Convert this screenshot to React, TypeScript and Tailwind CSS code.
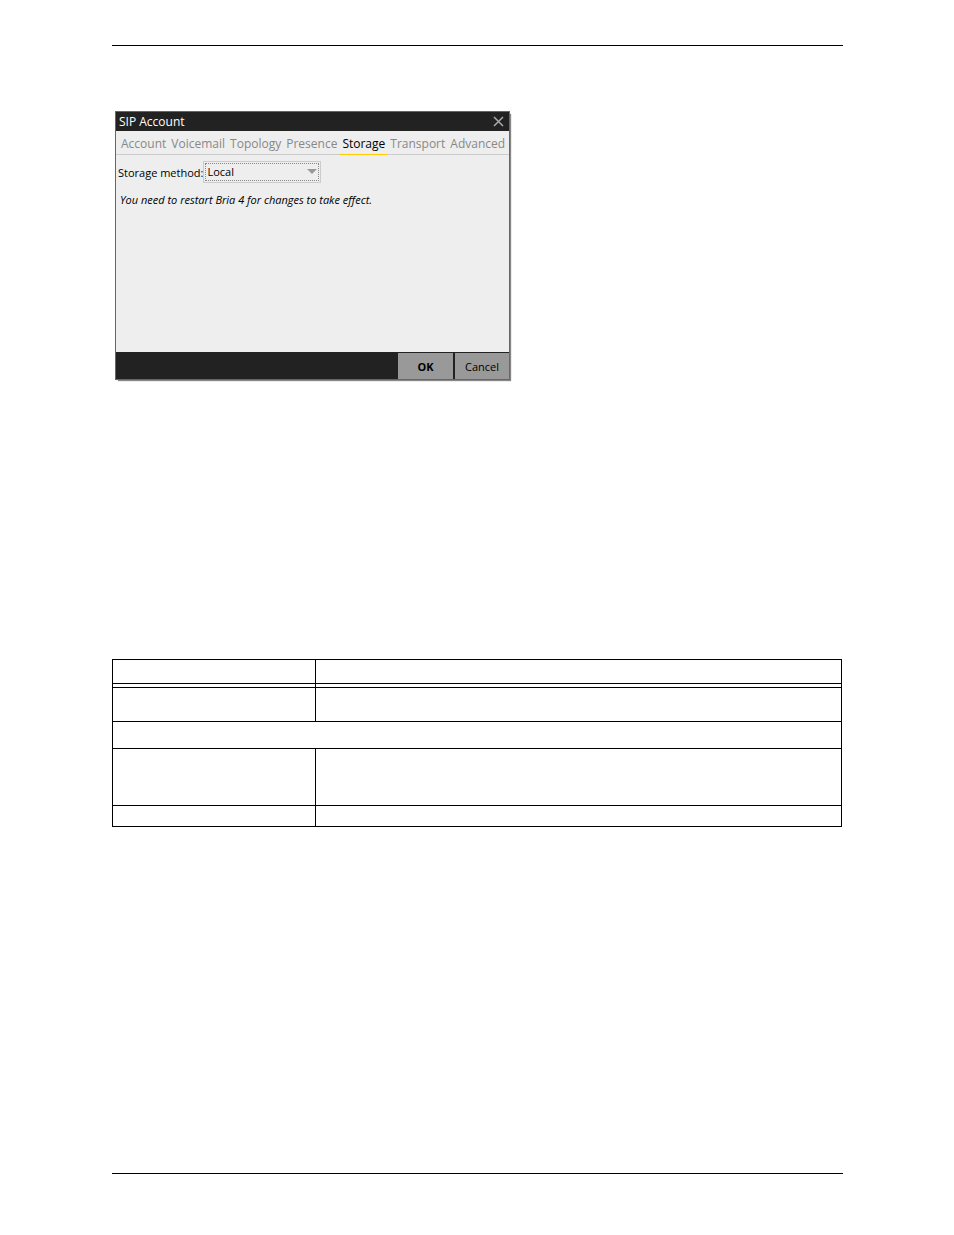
import { useState } from 'react'
import clsx from 'clsx'

const tabs = ['Account', 'Voicemail', 'Topology', 'Presence', 'Storage', 'Transport', 'Advanced']

function SipAccountDialog() {
  const [active, setActive] = useState('Storage')

  return (
    <section
      aria-label="SIP Account"
      className="ml-[3px] flex w-full max-w-[395px] flex-col border border-[#666] bg-[#eee] shadow-[2px_2px_1px_-1px_#888]"
    >
      {/* Title bar */}
      <header className="flex h-[19px] items-center justify-between bg-[#222] pl-[3px] pr-[5px]">
        <h1 className="text-[12px] leading-4 text-white">SIP Account</h1>
        <button type="button" aria-label="Close" className="text-[#aaa]">
          <svg width="11" height="11" viewBox="0 0 11 11" fill="none" stroke="currentColor" strokeWidth="1.5">
            <path d="M1 1l9 9M10 1l-9 9" />
          </svg>
        </button>
      </header>

      {/* Tabs */}
      <nav className="flex h-6 border-b border-[#ccc] pl-[2px]">
        {tabs.map((tab) => (
          <button
            key={tab}
            type="button"
            onClick={() => setActive(tab)}
            className={clsx(
              '-mb-px border-b pl-[3px] pr-[2px] pt-[2px] text-[12px] leading-4',
              tab === active ? 'border-[#fc0] text-black' : 'border-transparent text-[#888]'
            )}
          >
            {tab}
          </button>
        ))}
      </nav>

      <div className="h-[198px] border-b border-[#222] pl-[2px] pt-[6px]">
        <div className="flex items-center">
          <label htmlFor="storage-method" className="pt-px text-[11px] leading-4">
            Storage method:
          </label>
          <div className="relative border border-[#ccc] p-px">
            <select
              id="storage-method"
              className="block h-[18px] w-[114px] appearance-none border border-dotted border-[#888] bg-[#eee] pl-px text-[11px] leading-4 outline-none"
            >
              <option>Local</option>
            </select>
            <svg className="pointer-events-none absolute right-[3px] top-[7px] text-[#999]" width="10" height="5" viewBox="0 0 10 5">
              <path d="M0 0h10L5 5z" fill="currentColor" />
            </svg>
          </div>
        </div>
        <p className="mt-[7px] pl-[2px] text-[11px] italic leading-5">You need to restart Bria 4 for changes to take effect.</p>
      </div>

      {/* Actions */}
      <footer className="flex h-[26px] justify-end gap-[2px] bg-[#222]">
        <button type="button" className="w-[55px] bg-[#999] pt-[2px] text-[11px] font-bold leading-4">
          OK
        </button>
        <button type="button" className="w-[54px] bg-[#999] pt-[2px] text-[11px] leading-4">
          Cancel
        </button>
      </footer>
    </section>
  )
}

function SettingsTable() {
  const cell = 'border-b border-r border-black'

  return (
    <table className="mr-px table-fixed border-separate border-spacing-0 border-l border-t border-black">
      <colgroup>
        <col className="w-[203px]" />
        <col />
      </colgroup>
      <thead>
        <tr className="h-6">
          <th className={cell} />
          <th className={cell} />
        </tr>
      </thead>
      <tbody>
        <tr className="h-1">
          <td className={clsx(cell, 'p-0')} />
          <td className={clsx(cell, 'p-0')} />
        </tr>
        <tr className="h-[34px]">
          <td className={cell} />
          <td className={cell} />
        </tr>
        <tr className="h-[27px]">
          <td className={cell} colSpan={2} />
        </tr>
        <tr className="h-[57px]">
          <td className={cell} />
          <td className={cell} />
        </tr>
        <tr className="h-[21px]">
          <td className={cell} />
          <td className={cell} />
        </tr>
      </tbody>
    </table>
  )
}

export default function App() {
  return (
    <main className="flex min-h-screen flex-col bg-white pb-[61px] pl-28 pr-[111px] pt-[45px] font-['Open_Sans','Noto_Sans',sans-serif] text-black">
      <hr className="mb-[65px] border-t border-black" />
      <SipAccountDialog />
      <div className="mt-[279px] grid">
        <SettingsTable />
      </div>
      <hr className="mt-auto border-t border-black" />
    </main>
  )
}
